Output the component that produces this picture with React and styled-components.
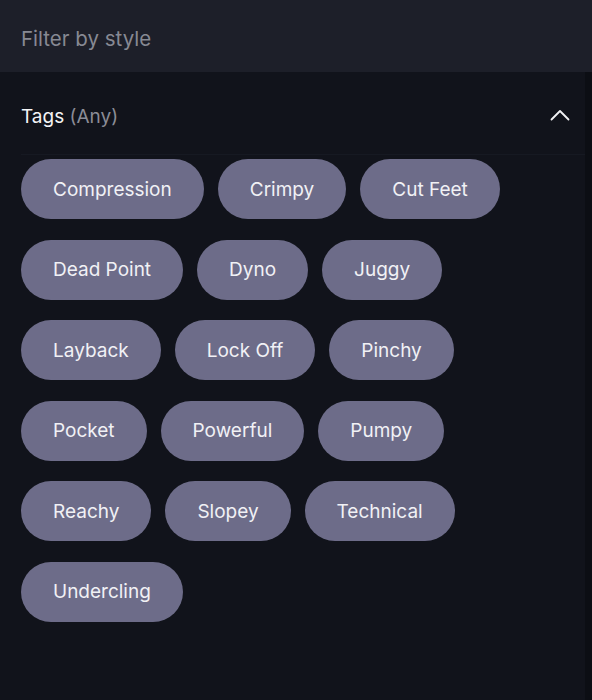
import styled, { createGlobalStyle } from 'styled-components';
import { useState } from 'react';

const TAGS = [
  "Compression", "Crimpy", "Cut Feet", "Dead Point", "Dyno", "Juggy",
  "Layback", "Lock Off", "Pinchy", "Pocket", "Powerful", "Pumpy",
  "Reachy", "Slopey", "Technical", "Undercling",
];

function App() {
  const [open, setOpen] = useState(true);

  return (
    <>
      <GlobalStyle />
      <Page>
        <Header>Filter by style</Header>
        <Section>
          <SectionHead onClick={() => setOpen(!open)}>
            <Title>Tags <Muted>(Any)</Muted></Title>
            <Chevron viewBox="0 0 20 12" $open={open}>
              <path d="M1.5 10.5 L10 2 L18.5 10.5" fill="none" stroke="#f2f2f5" strokeWidth="1.8" strokeLinecap="round" strokeLinejoin="round" />
            </Chevron>
          </SectionHead>
          {open && (
            <ChipList>
              {TAGS.map((tag) => (
                <Chip key={tag} type="button">{tag}</Chip>
              ))}
            </ChipList>
          )}
        </Section>
      </Page>
    </>
  );
}
export default App;

const GlobalStyle = createGlobalStyle`
  html, body {
    margin: 0;
    padding: 0;
    background: #11131b;
  }
  body {
    font-family: Inter, "Liberation Sans", sans-serif;
  }
`;

const Page = styled.div`
  width: 592px;
  height: 700px;
  background: #11131b;
  box-shadow: inset -7px 0 0 #0c0e14;
`;

const Header = styled.div`
  height: 67px;
  padding: 5px 21px 0;
  display: flex;
  align-items: center;
  background: #1d1f29;
  color: #878993;
  font-size: 20.5px;
  font-weight: 400;
`;

const Section = styled.section`
  padding: 0 22px 0 21px;
`;

const SectionHead = styled.div`
  height: 76px;
  padding: 6px 15px 0 0;
  margin-right: -15px;
  display: flex;
  align-items: center;
  justify-content: space-between;
  border-bottom: 1px solid #161922;
  cursor: pointer;
`;

const Title = styled.div`
  color: #f4f4f6;
  font-size: 19px;
  font-weight: 400;
`;

const Muted = styled.span`
  color: #8b8c96;
`;

const Chevron = styled.svg`
  width: 20px;
  height: 12px;
  margin-top: -2px;
  transform: ${(p) => (p.$open ? 'none' : 'rotate(180deg)')};
`;

const ChipList = styled.div`
  display: flex;
  flex-wrap: wrap;
  gap: 20.6px 14px;
  padding-top: 4px;
`;

const Chip = styled.button`
  height: 60px;
  padding: 0 32px;
  border: none;
  border-radius: 30px;
  background: #6d6c89;
  color: #f1f1f5;
  font-family: Inter, "Liberation Sans", sans-serif;
  font-size: 19px;
  font-weight: 400;
  cursor: pointer;
`;
